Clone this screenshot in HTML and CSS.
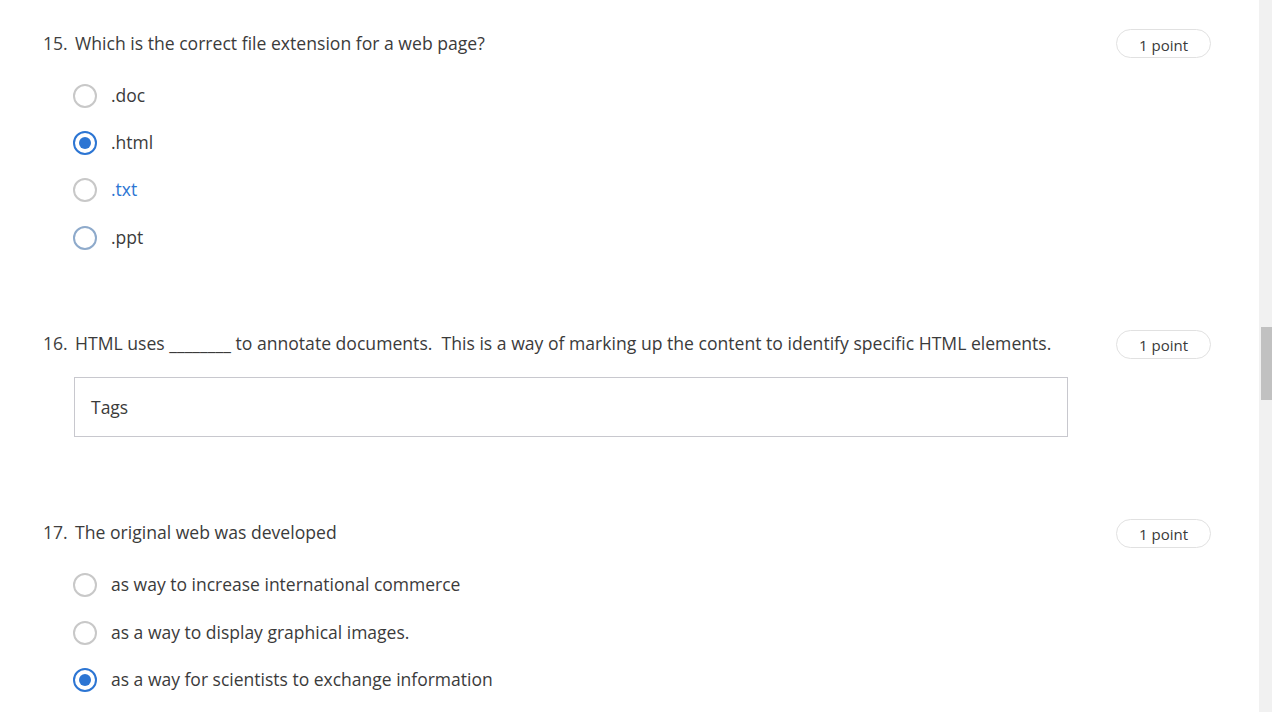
FILE: index.html
```html
<!DOCTYPE html>
<html lang="en">
<head>
<meta charset="utf-8">
<title>Quiz</title>
<link rel="stylesheet" href="styles.css">
</head>
<body>
<div class="page">
  <main class="form">
    <section class="question">
      <div class="q-head">
        <span class="q-num">15.</span>
        <span class="q-title">Which is the correct file extension for a web page?</span>
        <span class="points">1 point</span>
      </div>
      <ul class="choices">
        <li class="choice"><span class="radio"></span><span class="label">.doc</span></li>
        <li class="choice"><span class="radio checked"></span><span class="label">.html</span></li>
        <li class="choice"><span class="radio"></span><span class="label hover-text">.txt</span></li>
        <li class="choice"><span class="radio hover"></span><span class="label">.ppt</span></li>
      </ul>
    </section>

    <section class="question text-question">
      <div class="q-head">
        <span class="q-num">16.</span>
        <span class="q-title">HTML uses ________ to annotate documents.&nbsp; This is a way of marking up the content to identify specific HTML elements.</span>
        <span class="points">1 point</span>
      </div>
      <div class="answer-box">Tags</div>
    </section>

    <section class="question">
      <div class="q-head">
        <span class="q-num">17.</span>
        <span class="q-title">The original web was developed</span>
        <span class="points">1 point</span>
      </div>
      <ul class="choices">
        <li class="choice"><span class="radio"></span><span class="label">as way to increase international commerce</span></li>
        <li class="choice"><span class="radio"></span><span class="label">as a way to display graphical images.</span></li>
        <li class="choice"><span class="radio checked"></span><span class="label">as a way for scientists to exchange information</span></li>
      </ul>
    </section>
  </main>
  <div class="scrollbar"><div class="thumb"></div></div>
</div>
</body>
</html>
```

FILE: styles.css
```css
* { box-sizing: border-box; }
html, body {
  margin: 0;
  padding: 0;
  background: #ffffff;
  height: 100%;
  overflow: hidden;
}
body {
  font-family: "Open Sans", "Noto Sans", "Liberation Sans", sans-serif;
  color: #333333;
}
.page {
  display: flex;
  height: 712px;
}
.form {
  flex: 1;
  padding: 29px 48px 0 43px;
}
.question {
  margin-bottom: 68px;
}
.question.text-question {
  margin-bottom: 82px;
}
.q-head {
  display: flex;
  align-items: center;
  height: 29px;
}
.q-num {
  width: 32px;
  font-size: 17.6px;
  color: #404040;
  position: relative;
  top: -1px;
}
.q-title {
  flex: 1;
  font-size: 17.6px;
  color: #3b3b3b;
  position: relative;
  top: -1px;
  white-space: nowrap;
}
.points {
  width: 95px;
  height: 29px;
  border: 1px solid #e1e1e1;
  border-radius: 15px;
  display: flex;
  align-items: center;
  justify-content: center;
  font-size: 15px;
  color: #3a3a3a;
  margin-left: 20px;
  padding-top: 2px;
}
.choices {
  list-style: none;
  margin: 14px 0 0 30px;
  padding: 0;
}
.choice {
  display: flex;
  align-items: center;
  height: 47.4px;
}
.radio {
  width: 24px;
  height: 24px;
  border: 2px solid #c8c8c8;
  border-radius: 50%;
  margin-right: 14px;
  flex: none;
  display: flex;
  align-items: center;
  justify-content: center;
}
.radio.hover {
  border-color: #8eaacb;
}
.radio.checked {
  border-color: #2c75d3;
}
.radio.checked::after {
  content: "";
  width: 12px;
  height: 12px;
  border-radius: 50%;
  background: #2c75d3;
}
.label {
  font-size: 17.5px;
  color: #3b3b3b;
  position: relative;
  top: -1px;
}
.hover-text {
  color: #2c75d3;
}
.answer-box {
  margin: 18px 0 0 31px;
  width: 994px;
  height: 60px;
  border: 1px solid #c8c8ce;
  display: flex;
  align-items: center;
  padding-left: 16px;
  font-size: 17.5px;
  color: #3b3b3b;
}
.scrollbar {
  width: 13px;
  background: #f1f1f1;
  padding: 327px 0 0 2px;
}
.thumb {
  height: 73px;
  background: #c1c1c1;
}
```
